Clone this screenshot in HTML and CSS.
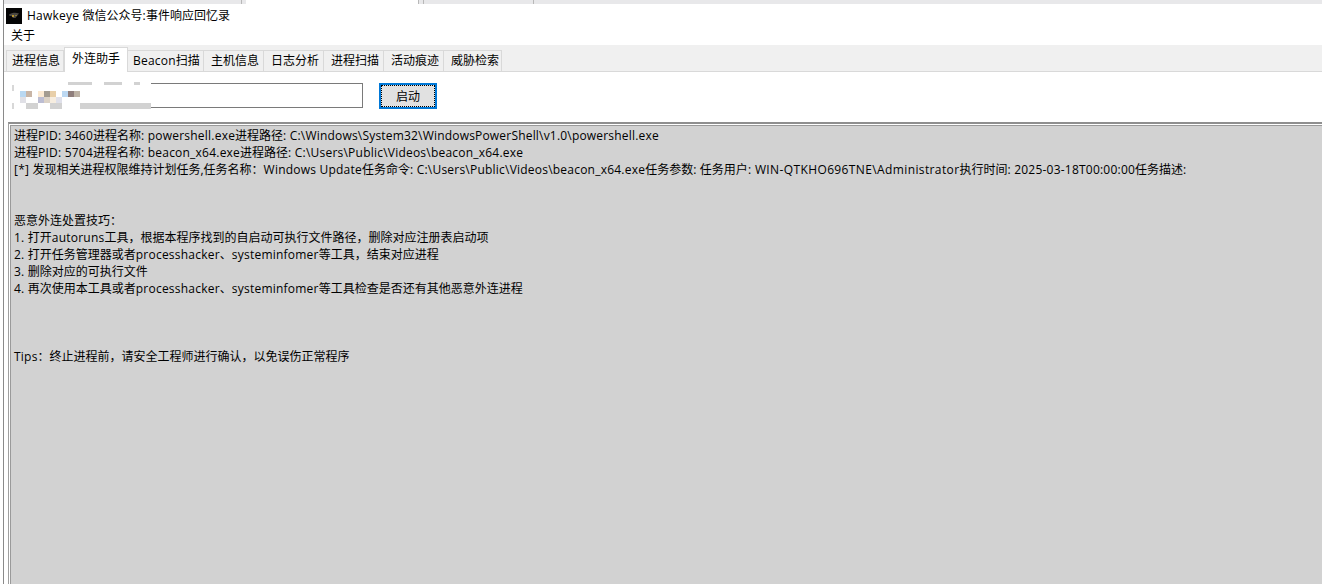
FILE: index.html
```html
<!DOCTYPE html>
<html lang="zh-CN">
<head>
<meta charset="utf-8">
<title>Hawkeye</title>
<link rel="stylesheet" href="styles.css">
</head>
<body>
<div class="page">
  <div class="topstrip">
    <div class="strip-a"></div>
    <div class="strip-b"></div>
    <div class="strip-c"></div>
    <div class="strip-d"></div>
  </div>
  <div class="titlebar">
    <svg class="appicon" width="16" height="16" viewBox="0 0 16 16"><rect width="16" height="16" fill="#050505"/><path d="M3 6.5 C6 4.5 10 4.5 13 5.5 L11 8 L9.5 10 L7 10 L5.5 8 L3.5 8 Z" fill="#4a4742"/><rect x="6" y="7" width="2" height="2" fill="#b8952f"/><rect x="9" y="7" width="2" height="1" fill="#8a7a3a"/></svg>
    <span class="title"><span class="la">Hawkeye </span>微信公众号<span class="la">:</span>事件响应回忆录</span>
  </div>
  <div class="menubar"><span class="menuitem">关于</span></div>
  <div class="tabbar">
    <div class="tab first">进程信息</div>
    <div class="tab active">外连助手</div>
    <div class="tab beacon"><span class="la">Beacon</span>扫描</div>
    <div class="tab">主机信息</div>
    <div class="tab">日志分析</div>
    <div class="tab">进程扫描</div>
    <div class="tab">活动痕迹</div>
    <div class="tab last">威胁检索</div>
  </div>
  <div class="formrow">
    <div class="inputwrap">
      <div class="input"></div>
      <svg class="blur" width="141" height="28" viewBox="-2 0 141 28">
        <rect x="-2" y="0" width="141" height="28" fill="#fff"/>
        <rect x="56" y="0" width="24" height="3" fill="#d2d2d2"/><rect x="92" y="0" width="18" height="3" fill="#d2d2d2"/><rect x="122" y="0" width="6" height="3" fill="#d2d2d2"/>
        <rect x="0" y="3" width="2" height="6" fill="#d8d8d8"/><rect x="0" y="21" width="2" height="6" fill="#d8d8d8"/>
        <rect x="8" y="9" width="6" height="6" fill="#b9d8f2"/><rect x="14" y="9" width="6" height="6" fill="#c8b5a6"/>
        <rect x="26" y="9" width="6" height="6" fill="#fbe9d2"/><rect x="32" y="9" width="6" height="6" fill="#a39b90"/><rect x="38" y="9" width="6" height="6" fill="#e8cfa9"/>
        <rect x="50" y="9" width="6" height="6" fill="#bcd8f2"/><rect x="56" y="9" width="6" height="6" fill="#8f7e7c"/><rect x="62" y="9" width="6" height="6" fill="#bdb2a5"/>
        <rect x="8" y="15" width="6" height="6" fill="#e0e0e6"/><rect x="26" y="15" width="6" height="6" fill="#bcbdd2"/><rect x="32" y="15" width="6" height="6" fill="#dcd2c6"/><rect x="38" y="15" width="6" height="6" fill="#f6ede0"/><rect x="44" y="15" width="6" height="6" fill="#dfe0ea"/>
        <rect x="14" y="21" width="12" height="6" fill="#d2d2d2"/><rect x="38" y="21" width="12" height="6" fill="#d2d2d2"/><rect x="68" y="21" width="71" height="6" fill="#d2d2d2"/>
      </svg>
    </div>
    <button class="start" type="button"><span class="start-inner">启动</span></button>
  </div>
  <div class="frame">
    <div class="output">
      <div class="line">进程<span class="la">PID: 3460</span>进程名称<span class="la">: powershell.exe</span>进程路径<span class="la tight">: C:\Windows\System32\WindowsPowerShell\v1.0\powershell.exe</span></div>
      <div class="line">进程<span class="la">PID: 5704</span>进程名称<span class="la">: beacon_x64.exe</span>进程路径<span class="la">: C:\Users\Public\Videos\beacon_x64.exe</span></div>
      <div class="line"><span class="la">[*] </span>发现相关进程权限维持计划任务,任务名称：<span class="la">Windows Update</span>任务命令<span class="la">: C:\Users\Public\Videos\beacon_x64.exe</span>任务参数<span class="la">: </span>任务用户<span class="la wide">: WIN-QTKHO696TNE\Administrator</span>执行时间<span class="la">: 2025-03-18T00:00:00</span>任务描述<span class="la">:</span></div>
      <div class="line"></div>
      <div class="line"></div>
      <div class="line">恶意外连处置技巧：</div>
      <div class="line"><span class="la">1. </span>打开<span class="la">autoruns</span>工具，根据本程序找到的自启动可执行文件路径，删除对应注册表启动项</div>
      <div class="line"><span class="la">2. </span>打开任务管理器或者<span class="la">processhacker</span>、<span class="la">systeminfomer</span>等工具，结束对应进程</div>
      <div class="line"><span class="la">3. </span>删除对应的可执行文件</div>
      <div class="line"><span class="la">4. </span>再次使用本工具或者<span class="la">processhacker</span>、<span class="la">systeminfomer</span>等工具检查是否还有其他恶意外连进程</div>
      <div class="line"></div>
      <div class="line"></div>
      <div class="line"></div>
      <div class="line"><span class="la">Tips</span>：终止进程前，请安全工程师进行确认，以免误伤正常程序</div>
    </div>
  </div>
</div>
</body>
</html>
```
FILE: styles.css
```css
* { box-sizing: border-box; }
html, body { margin: 0; padding: 0; height: 584px; overflow: hidden; background: #fff; }
body { font-family: "Open Sans", "Noto Sans CJK SC", sans-serif; font-size: 12px; color: #000; }
.la { letter-spacing: 0.22px; }
.la.tight { letter-spacing: 0.19px; }
.la.wide { letter-spacing: 0.38px; }
.page { height: 584px; margin-left: 3px; border-left: 1px solid #8a8a8a; display: flex; flex-direction: column; }
.topstrip { height: 4px; display: flex; background: #e8e8ea; flex: none; }
.strip-a { width: 238px; border-right: 1px solid #b8b8b8; }
.strip-b { width: 173px; margin-left: 4px; background: #fff; border-right: 1px solid #b8b8b8; }
.strip-c { width: 5px; border-right: 1px solid #b8b8b8; }
.strip-d { width: 110px; border-right: 1px solid #b8b8b8; }
.titlebar { height: 23px; flex: none; display: flex; align-items: center; padding-left: 2px; gap: 5px; }
.title { line-height: 17px; }
.menubar { height: 18px; flex: none; padding-left: 7px; line-height: 17px; }
.tabbar { height: 27px; flex: none; background: #f0f0f0; display: flex; align-items: flex-end; padding-left: 2px; border-bottom: 1px solid #d9d9d9; }
.tab { height: 21px; width: 60px; padding-left: 7px; line-height: 20px; background: #f0f0f0; border-top: 1px solid #d9d9d9; border-right: 1px solid #d9d9d9; white-space: nowrap; }
.tab.first { width: 58px; padding-left: 5px; border-left: 1px solid #d9d9d9; }
.tab.active { width: 64px; height: 25px; padding-left: 7px; margin-bottom: -1px; background: #fff; line-height: 21px; border-left: 1px solid #d9d9d9; position: relative; }
.tab.beacon { width: 76px; padding-left: 5px; }
.tab.last { width: 58px; }
.formrow { height: 50px; flex: none; display: flex; align-items: flex-start; padding: 11px 0 0 6px; }
.inputwrap { position: relative; width: 353px; height: 25px; }
.input { width: 100%; height: 100%; border: 1px solid #7a7a7a; background: #fff; }
.blur { position: absolute; left: 0; top: -1px; }
.start { margin-left: 16px; width: 58px; height: 26px; border: 2px solid #0078d7; background: #e1e1e1; padding: 0; font: inherit; color: #000; }
.start-inner { display: flex; align-items: center; justify-content: center; height: 100%; border: 1px dotted #000; }
.frame { flex: 1; min-height: 0; margin-left: 4px; padding: 1px 0 0 1px; border-top: 2px solid #8f8f8f; border-left: 1px solid #a0a0a0; }
.output { height: 100%; background: #d2d2d2; padding: 1px 0 0 3px; border-top: 1px solid #9a9a9a; border-left: 1px solid #9a9a9a; overflow: hidden; }
.line { height: 17px; line-height: 17px; white-space: nowrap; }
```
